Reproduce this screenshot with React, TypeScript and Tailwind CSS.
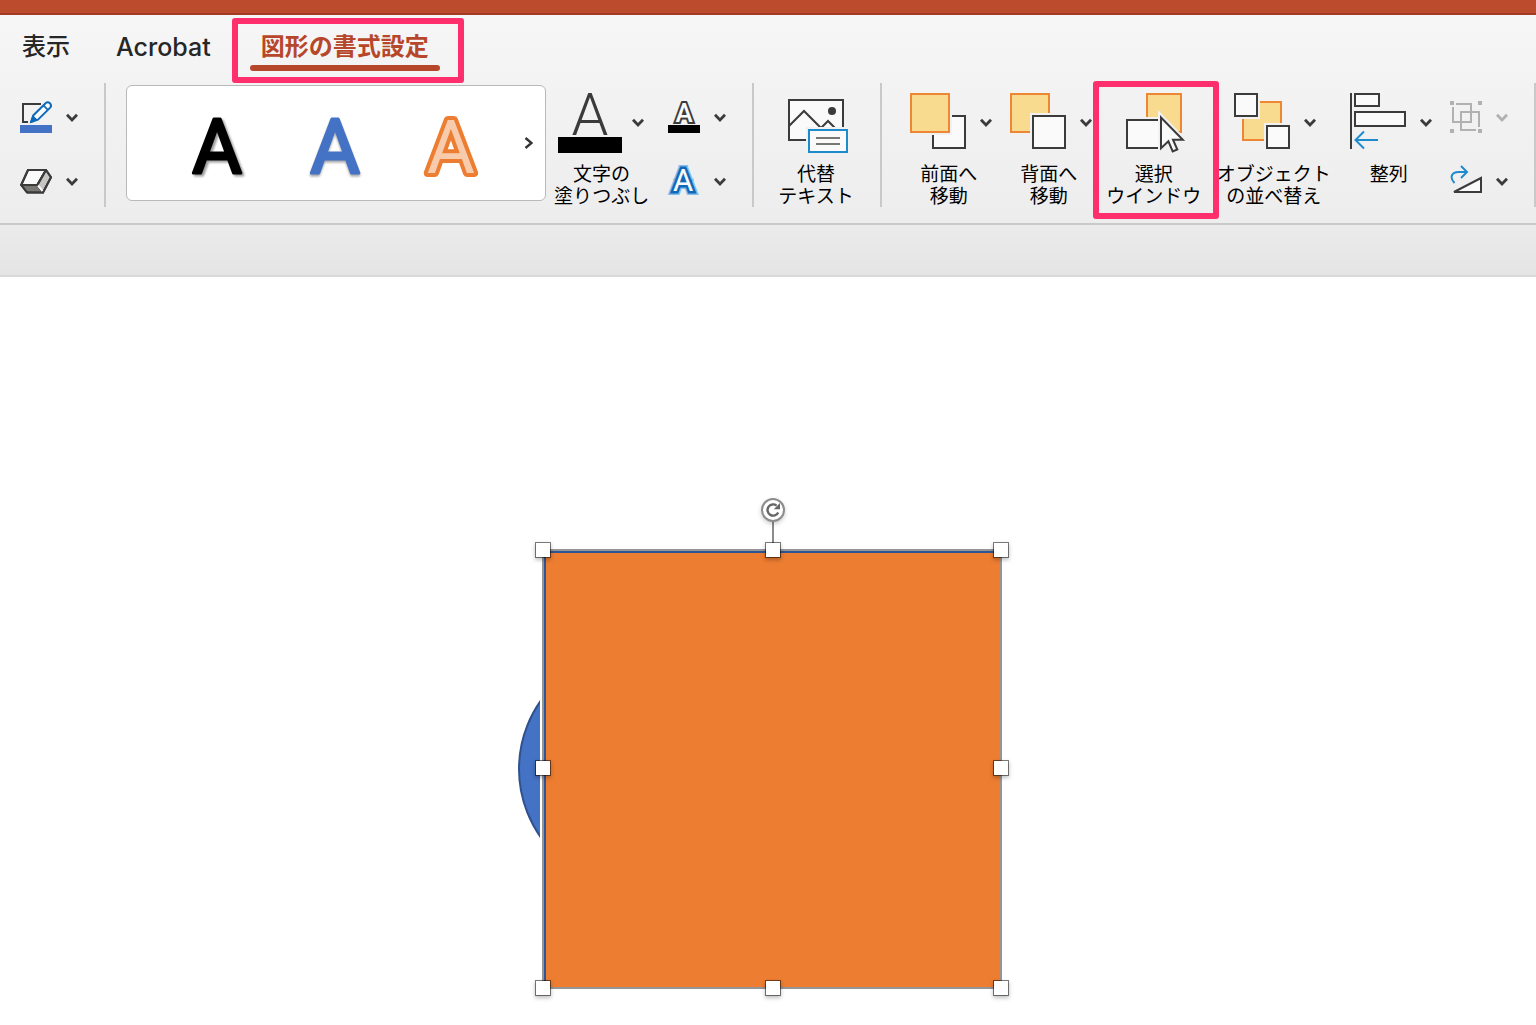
import type { ReactNode } from "react";

interface LargeToolProps {
    lines: string[];
    icon: ReactNode;
    align?: "center" | "start";
    menu?: boolean;
    rowClass?: string;
}

interface SmallToolProps {
    label: string;
    icon: ReactNode;
    disabled?: boolean;
}

const Chevron = () => (
    <svg width="14" height="10" viewBox="0 0 14 10" fill="none" stroke="currentColor" strokeWidth="2.8" className="shrink-0">
        <path d="M2 1.8 7 7 12 1.8" />
    </svg>
);

/* Icons */
const OutlineIcon = () => (
    <svg width="32" height="34" viewBox="0 0 32 34" fill="none">
        <path d="M21 3H3v18h5" stroke="#3b3b3b" strokeWidth="2" />
        <path d="M11 21 13.4 14.2 25.6 2.2a3.2 3.2 0 0 1 4.6 4.4L18 18.6Z" fill="#fafafa" stroke="#0f69b8" strokeWidth="2" strokeLinejoin="round" />
        <path d="m11 21 2-5.6 3.4 3.4ZM23.4 4.4l4.5 4.5" fill="#0f69b8" stroke="#0f69b8" strokeWidth="1.6" />
        <rect y="24" width="32" height="8" fill="#4472c4" />
    </svg>
);

const EffectsIcon = () => (
    <svg width="32" height="34" viewBox="0 0 32 34" stroke="#3b3b3b" strokeWidth="2" strokeLinejoin="round">
        <path d="M8 5h18l-8.7 15H1.2Z" fill="#fafafa" />
        <path d="M1.2 20h16.1l5.7 7.5H7Z" fill="#797774" />
        <path d="m26 5 5 7.3L23 27.5 17.3 20Z" fill="#c8c6c4" />
        <path d="M8 5h18l5 7.3L23 27.5H7L1.2 20ZM26 5l-8.7 15H1.2" fill="none" />
        <path d="m18 20.5 4.5 5.5" stroke="#fafafa" />
    </svg>
);

const TextFillLargeIcon = () => (
    <svg width="64" height="60" viewBox="0 0 64 60" className="overflow-visible">
        <text x="32" y="42" textAnchor="middle" fontFamily="Roboto, sans-serif" fontWeight="300" fontSize="59" fill="#3b3b3b">A</text>
        <rect y="44" width="64" height="16" fill="#000" />
    </svg>
);

const TextOutlineIcon = () => (
    <svg width="32" height="34" viewBox="0 0 32 34" className="overflow-visible">
        <text x="16" y="21" textAnchor="middle" fontFamily="Roboto, sans-serif" fontWeight="500" fontSize="26" fill="#fafafa" stroke="#3b3b3b" strokeWidth="4" paintOrder="stroke">A</text>
        <rect y="24" width="32" height="8" fill="#000" />
    </svg>
);

const TextEffectsIcon = () => (
    <svg width="32" height="34" viewBox="0 0 32 34" fontFamily="Roboto, sans-serif" fontSize="31" textAnchor="middle" className="overflow-visible">
        <text x="15" y="26" fill="#83bdec" stroke="#83bdec" strokeWidth="8">A</text>
        <text x="15" y="26" fill="#fafafa" stroke="#0f69b8" strokeWidth="5" paintOrder="stroke">A</text>
    </svg>
);

const AltTextIcon = () => (
    <svg width="60" height="60" viewBox="0 0 60 60" fill="none" strokeWidth="2">
        <rect x="1" y="7" width="54" height="40" fill="#fafafa" stroke="#3b3b3b" />
        <path d="m1 33 15-15 17 17 7-7 7 7" stroke="#3b3b3b" />
        <circle cx="44" cy="18" r="4" fill="#3b3b3b" />
        <path d="M18 34h42v26H18Z" fill="#f1f1f1" />
        <rect x="21" y="37" width="38" height="22" fill="#fafafa" stroke="#1e8bcd" />
        <path d="M28 45h24M28 51h24" stroke="#797774" />
    </svg>
);

const BringForwardIcon = () => (
    <svg width="56" height="60" viewBox="0 0 56 60" strokeWidth="2">
        <rect x="23" y="23" width="32" height="32" fill="#fafafa" stroke="#3b3b3b" />
        <path d="M0 0h42v42H0Z" fill="#f1f1f1" />
        <rect x="1" y="1" width="38" height="38" fill="#f8db8f" stroke="#ed8733" />
    </svg>
);

const SendBackwardIcon = () => (
    <svg width="56" height="60" viewBox="0 0 56 60" strokeWidth="2">
        <rect x="1" y="1" width="38" height="38" fill="#f8db8f" stroke="#ed8733" />
        <path d="M20 20h36v36H20Z" fill="#f1f1f1" />
        <rect x="23" y="23" width="32" height="32" fill="#fafafa" stroke="#3b3b3b" />
    </svg>
);

const SelectionPaneIcon = () => (
    <svg width="60" height="60" viewBox="0 0 60 60" strokeWidth="2">
        <rect x="21" y="1" width="34" height="38" fill="#f8db8f" stroke="#ed8733" />
        <path d="M0 24h32v34H0Z" fill="#f1f1f1" />
        <path d="M32 27H1v28h31" fill="#fafafa" stroke="#3b3b3b" />
        <path d="M32 17 62 48H32Z" fill="#f1f1f1" />
        <path d="M35 24.5v30.8l7.4-7 4.3 10.2 4.6-2-4.3-9.8h9.8Z" fill="#fafafa" stroke="#3b3b3b" />
    </svg>
);

const ReorderIcon = () => (
    <svg width="56" height="60" viewBox="0 0 56 60" strokeWidth="2">
        <rect x="9" y="9" width="38" height="38" fill="#f8db8f" stroke="#ed8733" />
        <path d="M0 0h26v26H0ZM30 30h26v26H30Z" fill="#f1f1f1" />
        <rect x="1" y="1" width="22" height="22" fill="#fafafa" stroke="#3b3b3b" />
        <rect x="33" y="33" width="22" height="22" fill="#fafafa" stroke="#3b3b3b" />
    </svg>
);

const AlignIcon = () => (
    <svg width="56" height="60" viewBox="0 0 56 60" fill="none" strokeWidth="2">
        <path d="M1 0v56" stroke="#3b3b3b" />
        <rect x="5" y="1" width="24" height="12" fill="#fafafa" stroke="#3b3b3b" />
        <rect x="5" y="19" width="50" height="14" fill="#fafafa" stroke="#3b3b3b" />
        <path d="M28 47H5.5M14 38.5 5.5 47l8.5 8.5" stroke="#1e8bcd" />
    </svg>
);

const GroupIcon = () => (
    <svg width="32" height="34" viewBox="0 0 32 34" fill="none" stroke="#b1b1b1" strokeWidth="2">
        <path d="M0 0h4v4H0ZM28 0h4v4h-4ZM0 28h4v4H0ZM28 28h4v4h-4Z" fill="#b1b1b1" stroke="none" />
        <path d="M6 3h15v18H3V6" />
        <path d="M26 29H11V11h18v15" />
    </svg>
);

const RotateIcon = () => (
    <svg width="32" height="34" viewBox="0 0 32 34" fill="none" strokeWidth="2">
        <path d="M4.5 18C-1 12 2 7 8.5 7h8M11 1l6 6-6 6" stroke="#1e8bcd" />
        <path d="M4 27h27V13Z" fill="#fafafa" stroke="#3b3b3b" />
    </svg>
);

/* Ribbon pieces */
const Separator = () => <div className="h-[124px] w-0.5 shrink-0 bg-[#c9c9c9]" />;

const Highlight = ({ className }: { className: string }) => (
    <span className={`pointer-events-none absolute rounded-[3px] border-6 border-[#ff2f6d] ${className}`} />
);

function LargeTool({ lines, icon, align = "center", menu = true, rowClass = "gap-[13px]" }: LargeToolProps) {
    return (
        <button
            type="button"
            className={`flex shrink-0 flex-col gap-[11px] pt-2.5 ${align === "center" ? "items-center" : "items-start"}`}
        >
            <span className={`flex items-center text-[#3b3b3b] ${rowClass}`}>
                {icon}
                {menu && <Chevron />}
            </span>
            <span className={`text-center text-[19px] leading-[22px] whitespace-nowrap text-black ${align === "start" ? "w-[78px]" : ""}`}>
                {lines.map((line) => (
                    <span key={line} className="block">{line}</span>
                ))}
            </span>
        </button>
    );
}

function SmallTool({ label, icon, disabled = false }: SmallToolProps) {
    return (
        <button
            type="button"
            aria-label={label}
            disabled={disabled}
            className="flex items-center gap-[13px] text-[#3b3b3b] disabled:text-[#b1b1b1]"
        >
            {icon}
            <Chevron />
        </button>
    );
}

const SmallColumn = ({ children }: { children: ReactNode }) => (
    <div className="flex shrink-0 flex-col gap-[30px] pt-[18px]">{children}</div>
);

function StyleGallery() {
    return (
        <div className="mt-0.5 flex h-[116px] w-[420px] shrink-0 items-center rounded-md border border-[#b9b9b9] bg-white pl-8">
            <button type="button" className="w-[117px]">
                <svg viewBox="0 0 117 100" className="drop-shadow-[2px_2px_1px_rgba(0,0,0,0.4)]">
                    <text x="58" y="80" textAnchor="middle" fontFamily="Roboto, sans-serif" fontSize="76" stroke="#000" strokeWidth="3" strokeLinejoin="round">A</text>
                </svg>
            </button>
            <button type="button" className="w-[117px]">
                <svg viewBox="0 0 117 100" className="drop-shadow-[0_2px_1px_rgba(0,0,0,0.35)]">
                    <text x="59" y="80" textAnchor="middle" fontFamily="Roboto, sans-serif" fontSize="76" fill="#4472c4" stroke="#4472c4" strokeWidth="3" strokeLinejoin="round">A</text>
                </svg>
            </button>
            <button type="button" className="w-[117px]">
                <svg viewBox="0 0 117 100" fontFamily="Roboto, sans-serif" fontSize="74" textAnchor="middle" strokeLinejoin="round">
                    <text x="58" y="80" fill="#ed7d31" stroke="#ed7d31" strokeWidth="8">A</text>
                    <text x="58" y="80" fill="#f8cbad">A</text>
                </svg>
            </button>
            <button type="button" aria-label="その他のスタイル" className="flex flex-1 justify-center">
                <svg width="10" height="14" viewBox="0 0 10 14" fill="none" stroke="#333" strokeWidth="2.4">
                    <path d="m2.5 2 6 5-6 5" />
                </svg>
            </button>
        </div>
    );
}

/* Canvas */
const handles = [
    "-left-[9px] -top-[9px]",
    "left-[221px] -top-[9px]",
    "left-[449px] -top-[9px]",
    "-left-[9px] top-[209px]",
    "left-[449px] top-[209px]",
    "-left-[9px] top-[429px]",
    "left-[221px] top-[429px]",
    "left-[449px] top-[429px]",
];

function SelectedSquare() {
    return (
        <div className="absolute left-[542px] top-[272px] h-[440px] w-[460px] border-2 border-[#959595]">
            <div className="h-full border-t-2 border-l-2 border-[#2f5597] bg-[#ed7d31]" />
            <div className="absolute left-[228px] -top-[30px] h-6 w-0.5 bg-[#8c8c8c]" />
            <button
                type="button"
                aria-label="回転"
                className="absolute left-[217px] -top-[53px] flex size-6 items-center justify-center rounded-full border-2 border-[#8c8c8c] bg-white shadow-[0_2px_4px_rgba(0,0,0,0.2)]"
            >
                <svg width="16" height="16" viewBox="0 0 16 16" fill="none" className="shrink-0">
                    <path d="M13.2 10.4a5.6 5.6 0 1 1-1.6-6.8" stroke="#666" strokeWidth="2.4" />
                    <path d="M15 1v6.2H8.8Z" fill="#666" />
                </svg>
            </button>
            {handles.map((place) => (
                <span
                    key={place}
                    className={`absolute size-4 border border-black/50 bg-white bg-clip-padding shadow-[0_2px_4px_rgba(0,0,0,0.25)] ${place}`}
                />
            ))}
        </div>
    );
}

function App() {
    return (
        <div className="flex min-h-screen flex-col overflow-hidden bg-white font-['Inter','Noto_Sans_CJK_JP',sans-serif]">
            <div className="h-[15px] border-b-2 border-[#a33b24] bg-[#bc4a2c]" />

            <header className="border-b-2 border-[#c9c9c9] bg-linear-to-b from-[#f6f6f6] to-[#ededed]">
                {/* Tabs */}
                <nav className="flex h-[68px] items-start pt-3.5 pl-[22px] text-2xl leading-9 font-medium text-[#262626]">
                    <button type="button" className="mr-[46px]">表示</button>
                    <button type="button" className="mr-[39px] text-[25px] leading-9">Acrobat</button>
                    <button type="button" className="relative w-[190px] shrink-0 font-bold text-[#b7472a]">
                        図形の書式設定
                        <span className="block h-1.5 rounded-full bg-[#b7472a]" />
                        <Highlight className="-right-6 -left-[18px] -top-[11px] h-[65px]" />
                    </button>
                </nav>

                {/* Ribbon */}
                <div className="flex items-start pb-[15px] pl-5">
                    <SmallColumn>
                        <SmallTool label="図形の枠線" icon={<OutlineIcon />} />
                        <SmallTool label="図形の効果" icon={<EffectsIcon />} />
                    </SmallColumn>
                    <div className="mr-5 ml-[25px]">
                        <Separator />
                    </div>
                    <StyleGallery />
                    <div className="mr-[19px] ml-2">
                        <LargeTool lines={["文字の", "塗りつぶし"]} icon={<TextFillLargeIcon />} rowClass="gap-[9px]" />
                    </div>
                    <SmallColumn>
                        <SmallTool label="文字の輪郭" icon={<TextOutlineIcon />} />
                        <SmallTool label="文字の効果" icon={<TextEffectsIcon />} />
                    </SmallColumn>
                    <div className="mr-6 ml-[25px]">
                        <Separator />
                    </div>
                    <LargeTool lines={["代替", "テキスト"]} icon={<AltTextIcon />} menu={false} rowClass="pl-1" />
                    <div className="mr-7 ml-[26px]">
                        <Separator />
                    </div>
                    <div className="flex gap-[17px]">
                        <LargeTool lines={["前面へ", "移動"]} icon={<BringForwardIcon />} align="start" />
                        <LargeTool lines={["背面へ", "移動"]} icon={<SendBackwardIcon />} align="start" />
                    </div>
                    <div className="relative mr-0.5 flex w-[122px] shrink-0 justify-center">
                        <LargeTool lines={["選択", "ウインドウ"]} icon={<SelectionPaneIcon />} menu={false} rowClass="pl-1" />
                        <Highlight className="-top-0.5 -right-1 left-0 z-10 h-[138px]" />
                    </div>
                    <LargeTool lines={["オブジェクト", "の並べ替え"]} icon={<ReorderIcon />} rowClass="gap-[13px] pl-1" />
                    <div className="mr-[17px] ml-[19px]">
                        <LargeTool lines={["整列"]} icon={<AlignIcon />} align="start" />
                    </div>
                    <SmallColumn>
                        <SmallTool label="グループ化" icon={<GroupIcon />} disabled />
                        <SmallTool label="回転" icon={<RotateIcon />} />
                    </SmallColumn>
                    <div className="ml-[25px]">
                        <Separator />
                    </div>
                </div>
            </header>

            <div className="h-[52px] border-b-2 border-[#d9d9d9] bg-linear-to-b from-[#ebebeb] to-[#e5e5e5]" />

            {/* Slide */}
            <main className="relative min-h-[748px] flex-1 bg-white">
                <svg width="22" height="140" viewBox="0 0 22 140" className="absolute left-[518px] top-[422px]">
                    <circle cx="119" cy="70" r="118" fill="#4472c4" stroke="#2f528f" strokeWidth="2" />
                </svg>
                <SelectedSquare />
            </main>
        </div>
    );
}

export default App;
